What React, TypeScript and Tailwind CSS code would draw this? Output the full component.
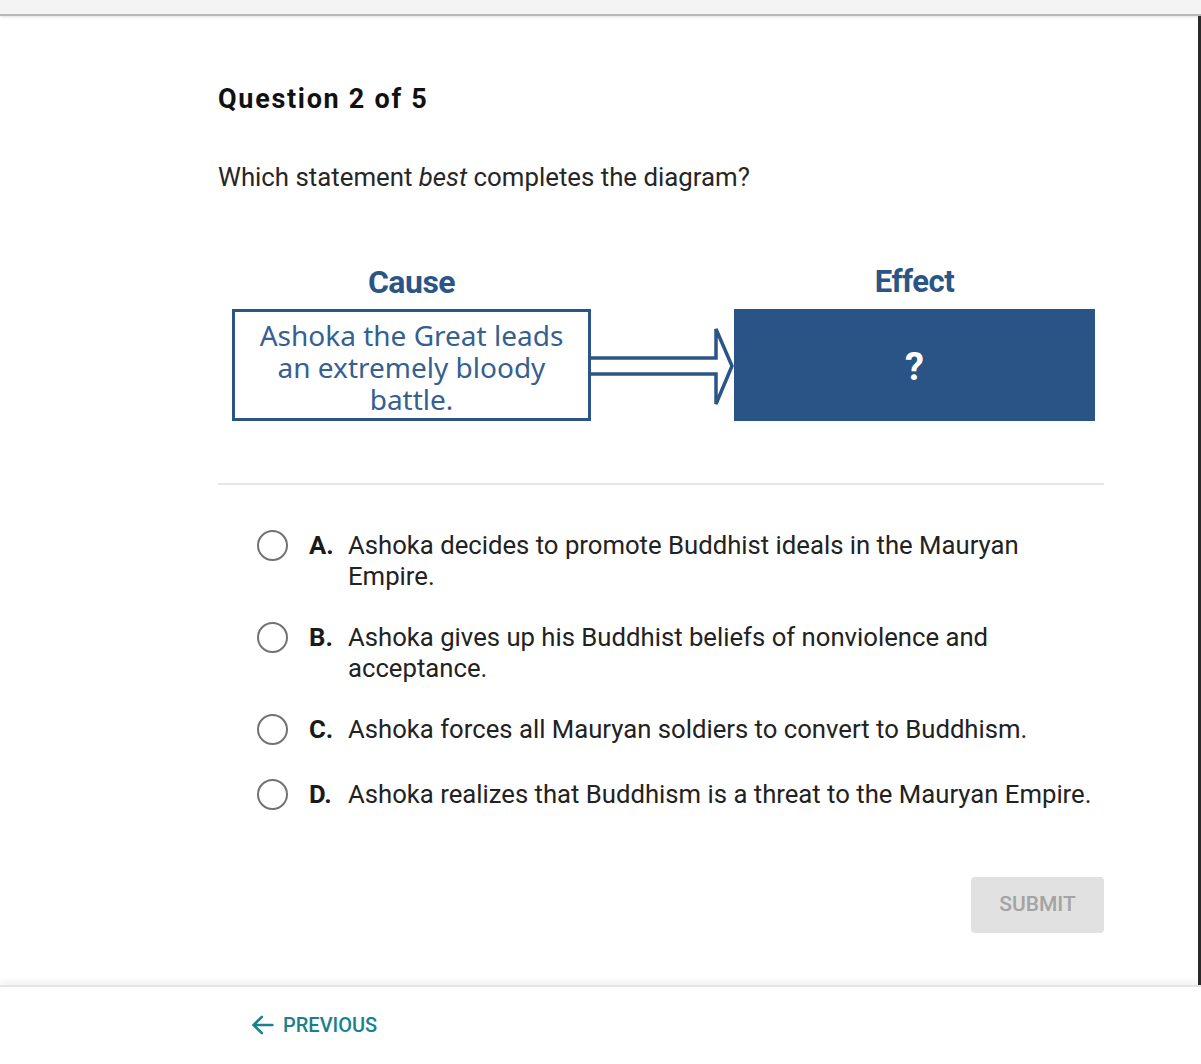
import { ReactNode } from "react";

const options = [
  { letter: "A.", text: "Ashoka decides to promote Buddhist ideals in the Mauryan Empire." },
  { letter: "B.", text: "Ashoka gives up his Buddhist beliefs of nonviolence and acceptance." },
  { letter: "C.", text: "Ashoka forces all Mauryan soldiers to convert to Buddhism." },
  { letter: "D.", text: "Ashoka realizes that Buddhism is a threat to the Mauryan Empire." },
];

function Option({ letter, children }: { letter: string; children: ReactNode }) {
  return (
    <div className="flex items-start last:mt-[4px]">
      <div className="w-[31px] h-[31px] shrink-0 rounded-full border-[2.5px] border-[#727272]" />
      <span className="ml-[21px] w-[39px] shrink-0 font-bold text-[#1a1a1a]">{letter}</span>
      <span className="max-w-[754px] text-[#222]">{children}</span>
    </div>
  );
}

function Diagram() {
  return (
    <div className="pl-[14px] w-[877px]">
      <div className="flex leading-[36px] font-bold text-[#2b5586] tracking-[-0.5px]">
        <div className="w-[359px] text-center text-[32px]">Cause</div>
        <div className="w-[143px]" />
        <div className="w-[361px] text-center text-[31px]">Effect</div>
      </div>
      <div className="flex mt-[9px] h-[112px]">
        <div
          className="w-[359px] border-[3px] border-[#2b5586] flex items-center justify-center text-center text-[28px] leading-[32px] text-[#35608f]"
          style={{ fontFamily: '"Noto Sans", sans-serif' }}
        >
          <span className="pt-[3px]">
            Ashoka the Great leads
            <br />
            an extremely bloody
            <br />
            battle.
          </span>
        </div>
        <svg width="143" height="112" viewBox="0 0 143 112" className="shrink-0">
          <path
            d="M-2 49 H125 V20 L141 57 L125 95 V65 H-2"
            fill="#fff"
            stroke="#2b5586"
            strokeWidth="3.5"
            strokeLinejoin="miter"
          />
        </svg>
        <div className="w-[361px] bg-[#2a5486] flex items-center justify-center">
          <span className="text-white font-bold text-[38px] leading-none pt-[4px]">?</span>
        </div>
      </div>
    </div>
  );
}

export default function App() {
  return (
    <div className="w-[1201px] h-[1064px] bg-white overflow-hidden" style={{ fontFamily: 'Roboto, "Liberation Sans", sans-serif' }}>
      <div className="h-[16px] bg-[#f4f4f4] border-b-[2px] border-[#b9b9b9] shadow-[0_1px_3px_rgba(0,0,0,0.12)]" />
      <div className="h-[969px] border-r-[3px] border-[#2a2a2a] pl-[218px] flex flex-col">
        <h1 className="mt-[67px] text-[27px] leading-[32px] font-bold tracking-[1.7px] text-[#111]">
          Question 2 of 5
        </h1>
        <p className="mt-[46px] text-[25.8px] leading-[32px] text-[#262626]">
          Which statement <i>best</i> completes the diagram?
        </p>
        <div className="mt-[71px]">
          <Diagram />
        </div>
        <div className="mt-[62px] w-[886px] h-[2px] bg-[#e6e6e6]" />
        <div className="mt-[45px] pl-[39px] flex flex-col gap-[30px] text-[25.7px] leading-[31px]">
          {options.map((o) => (
            <Option key={o.letter} letter={o.letter}>
              {o.text}
            </Option>
          ))}
        </div>
        <div className="w-[886px] flex justify-end mt-[67px]">
          <button className="w-[133px] h-[56px] rounded-[4px] bg-[#e1e1e1] text-[21px] font-medium text-[#a3a3a3]">
            SUBMIT
          </button>
        </div>
      </div>
      <div className="border-t-[2px] border-[#e4e4e4] shadow-[0_-4px_6px_rgba(0,0,0,0.05)] h-[77px] pl-[249px] flex items-center">
        <div className="flex items-center gap-[6px] text-[#1b7f8d]">
          <svg width="28" height="28" viewBox="0 0 24 24" fill="none" stroke="currentColor" strokeWidth="2.2" strokeLinecap="round" strokeLinejoin="round">
            <path d="M20 12H4" />
            <path d="M11 5l-7 7 7 7" />
          </svg>
          <span className="text-[20px] font-medium">PREVIOUS</span>
        </div>
      </div>
    </div>
  );
}
